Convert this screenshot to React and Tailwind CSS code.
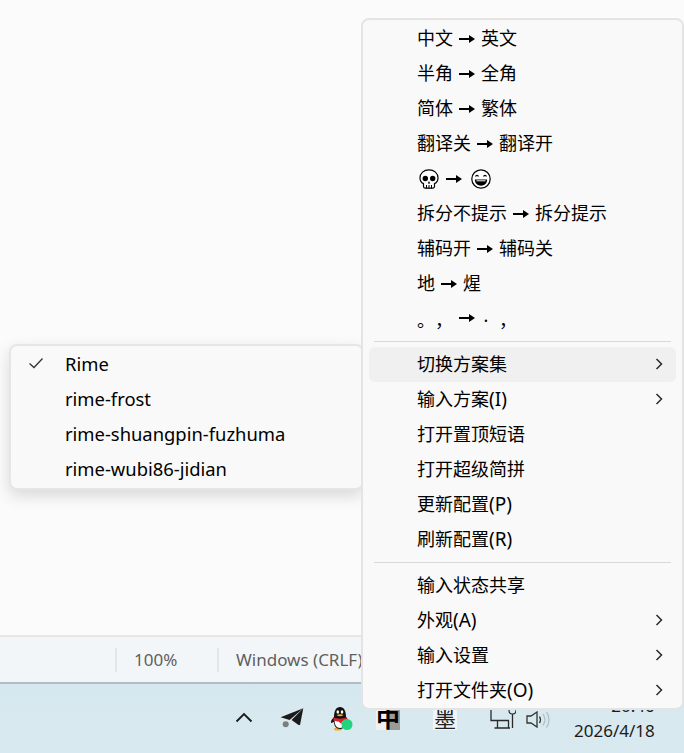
const font = { fontFamily: '"Noto Sans", "Noto Sans CJK SC", sans-serif' };

function Arrow({ className = "mx-[6px]" }) {
  return (
    <svg width="16" height="10" viewBox="0 0 16 10" className={`shrink-0 ${className}`} aria-hidden="true">
      <path d="M0 5h11" stroke="#000" strokeWidth="2" fill="none" />
      <path d="M10 1l6 4-6 4z" fill="#000" />
    </svg>
  );
}

function Chevron() {
  return (
    <svg width="8" height="12" viewBox="0 0 8 12" className="absolute right-[13px] top-[11px]" aria-hidden="true">
      <path d="M1.500 1l5 5-5 5" stroke="#2a2a2a" strokeWidth="1.500" fill="none" />
    </svg>
  );
}

function Skull() {
  return (
    <svg width="20" height="20" viewBox="0 0 20 20" aria-hidden="true">
      <path d="M10 .8C4.800.8 1 4.300 1 9c0 2.700 1.200 4.600 3.500 5.600v3c0 .9.600 1.500 1.500 1.500h8c.9 0 1.500-.6 1.500-1.500v-3C17.800 13.600 19 11.700 19 9 19 4.300 15.200.8 10 .8z" fill="#fff" stroke="#000" strokeWidth="1.200" />
      <circle cx="6.300" cy="9.500" r="2.700" fill="#000" />
      <circle cx="13.700" cy="9.500" r="2.700" fill="#000" />
      <path d="M10 12l-1.300 2.500h2.600z" fill="#000" />
      <path d="M7.500 16v3.500M10 16v3.500M12.500 16v3.500" stroke="#000" strokeWidth="1" />
    </svg>
  );
}

function Grin() {
  return (
    <svg width="20" height="20" viewBox="0 0 20 20" aria-hidden="true">
      <circle cx="10" cy="10" r="9.200" fill="#fff" stroke="#000" strokeWidth="1.200" />
      <path d="M4.500 7.500c.6-1.600 2.400-1.600 3 0M12.500 7.500c.6-1.600 2.400-1.600 3 0" stroke="#000" strokeWidth="1.200" fill="none" />
      <path d="M3.800 10.500h12.400c0 3.800-2.800 6.200-6.200 6.200s-6.200-2.400-6.200-6.200z" fill="#000" />
      <path d="M5.500 11.300h9v1h-9z" fill="#fff" />
    </svg>
  );
}

function Item({ children, chevron, active }) {
  return (
    <div className={`relative mx-[6px] flex h-[35px] items-center rounded-md pl-[48px] text-[18px] text-black ${active ? "bg-[#f0f0f0]" : ""}`}>
      {children}
      {chevron && <Chevron />}
    </div>
  );
}

function Pair({ a, b }) {
  return (
    <span className="flex items-center">
      <span>{a}</span>
      <Arrow />
      <span>{b}</span>
    </span>
  );
}

function Key({ children }) {
  return <span className="text-[19px]">{children}</span>;
}

function Sep() {
  return <div className="mx-[11px] my-[5px] h-px bg-[#d8d8d8]" />;
}

function Penguin() {
  return (
    <svg width="24" height="25" viewBox="0 0 24 25" aria-hidden="true">
      <ellipse cx="8" cy="23" rx="4" ry="1.500" fill="#f5a623" />
      <path d="M1 16c0-2 2-4 3-5 0-6 2-10 6-10s6 4 6 10c1 1 2 2 2 4l-1.500 1c0 3-2 7-6.500 7S4 19 4 16l-3 1z" fill="#111" />
      <path d="M4.500 14c0 5 2 8 5.500 8s5.500-3 5.500-8z" fill="#fff" />
      <path d="M3.500 11.500c3 1.500 9 1.500 13 0l.5 2.500c-2 1-3 1-5 1.500l-.5 2.500-3-2.500c-2 0-3-.5-5-1z" fill="#e0202a" />
      <ellipse cx="7.800" cy="6" rx="1.300" ry="1.800" fill="#fff" />
      <ellipse cx="12" cy="6" rx="1.300" ry="1.800" fill="#fff" />
      <path d="M6.500 9c2-1 5-1 7 0-2 1.600-5 1.600-7 0z" fill="#f5b323" />
      <circle cx="17" cy="18.500" r="5.500" fill="#22d47f" />
    </svg>
  );
}

export default function App() {
  return (
    <div className="relative flex h-[753px] w-[684px] flex-col overflow-hidden bg-[#fbfbfb]" style={font}>
      <div className="h-[635px] shrink-0" />

      <div className="flex h-[49px] shrink-0 items-center border-t-2 border-b-2 border-t-[#e6e6e6] border-b-[#b1bcc3] bg-[#f3f6f8] pl-[115px] text-[17px] text-[#5f5f5f]">
        <div className="flex h-[24px] w-[102px] items-center border-l-2 border-[#e3e6e8] pl-[17px]">100%</div>
        <div className="flex h-[24px] items-center whitespace-nowrap border-l-2 border-[#e3e6e8] pl-[17px]">Windows (CRLF)</div>
      </div>

      <div className="flex flex-1 items-start bg-gradient-to-b from-[#d6e8ef] to-[#d9e9f0] pl-[235px] pt-[22px]">
        <div className="flex w-[18px] justify-center pt-[6px]">
          <svg width="18" height="11" viewBox="0 0 18 11" aria-hidden="true">
            <path d="M1.500 9.500L9 2l7.500 7.500" stroke="#1a1a1a" strokeWidth="1.800" fill="none" />
          </svg>
        </div>
        <div className="ml-[27px] w-[24px]">
          <svg width="24" height="22" viewBox="0 0 24 22" aria-hidden="true">
            <path d="M23.300 2.300L.6 11.300l9 2.700z" fill="#1a1a1a" />
            <path d="M23.300 2.300L11.600 14l7 5h1.400z" fill="#1a1a1a" />
            <circle cx="5.700" cy="18.300" r="3" fill="#7d7d7d" />
          </svg>
        </div>
        <div className="ml-[26px] w-[24px]"><Penguin /></div>
        <div className="ml-[22px] flex h-[24px] w-[24px] items-center justify-center bg-[linear-gradient(90deg,#eef2f3_0%,#eef2f3_50%,#9a9a9a_50%,#9a9a9a_100%)] text-[24px] font-bold leading-none text-black">中</div>
        <div className="ml-[33px] flex h-[24px] w-[24px] items-center justify-center bg-[#f2f4f5] text-[22px] leading-none text-[#222]">墨</div>
        <div className="ml-[33px] w-[26px]">
          <svg width="26" height="24" viewBox="0 0 26 24" aria-hidden="true">
            <path d="M1 0v14.500h18M7.500 14.500v7.500M4.500 22h15.500M18.500 14.500v7.500M22.500 8v14" stroke="#2a2a2a" strokeWidth="1.300" fill="none" />
            <path d="M19 2v2.500c0 2 1.500 3.500 3.500 3.500s3.500-1.500 3.500-3.500V2" stroke="#2a2a2a" strokeWidth="1.200" fill="none" />
          </svg>
        </div>
        <div className="ml-[10px] w-[26px] pt-[5px]">
          <svg width="26" height="18" viewBox="0 0 26 18" aria-hidden="true">
            <path d="M1 5h4L11 1v15l-6-4H1z" stroke="#333" strokeWidth="1.300" fill="none" />
            <path d="M13.500 5.500c1.200 2 1.200 4.500 0 6.500" stroke="#333" strokeWidth="1.300" fill="none" />
            <path d="M17 3c2.300 3.500 2.300 8 0 11.500M20.500 1c3.300 4.500 3.300 11 0 15.500" stroke="#b5bfc4" strokeWidth="1.300" fill="none" />
          </svg>
        </div>
        <div className="ml-[22px] -mt-[12px] whitespace-nowrap text-[17px] leading-[26px] text-[#1b1b1b]">
          <div className="text-right leading-[24px]">20:46</div>
          <div>2026/4/18</div>
        </div>
      </div>

      <div className="absolute left-[9px] top-[344px] flex h-[146px] w-[355px] flex-col rounded-lg border-2 border-[#e6e6e6] bg-[#f9f9f9] text-[18.4px] text-black shadow-[0_6px_16px_rgba(0,0,0,0.14)]">
        <div className="relative flex h-[35px] items-center pl-[54px]">
          <svg width="16" height="12" viewBox="0 0 16 12" className="absolute left-[17px] top-[11px]" aria-hidden="true">
            <path d="M1.500 6.500L6 10.500 14.500 1.500" stroke="#333" strokeWidth="1.300" fill="none" />
          </svg>
          Rime
        </div>
        <div className="flex h-[35px] items-center pl-[54px]">rime-frost</div>
        <div className="flex h-[35px] items-center pl-[54px]">rime-shuangpin-fuzhuma</div>
        <div className="flex h-[35px] items-center pl-[54px]">rime-wubi86-jidian</div>
      </div>

      <div className="absolute left-[361px] top-[18px] flex w-[323px] flex-col rounded-lg border-2 border-[#e4e4e4] bg-[#f9f9f9] pt-[1px]">
        <Item><Pair a="中文" b="英文" /></Item>
        <Item><Pair a="半角" b="全角" /></Item>
        <Item><Pair a="简体" b="繁体" /></Item>
        <Item><Pair a="翻译关" b="翻译开" /></Item>
        <Item>
          <span className="ml-[2px] flex items-center">
            <Skull />
            <Arrow className="ml-[7px] mr-[9px]" />
            <Grin />
          </span>
        </Item>
        <Item><Pair a="拆分不提示" b="拆分提示" /></Item>
        <Item><Pair a="辅码开" b="辅码关" /></Item>
        <Item><Pair a="地" b="煋" /></Item>
        <Item>
          <span className="flex items-center">
            <span className="mt-[4px] w-[18px]">。</span>
            <span className="mt-[4px] w-[18px]">，</span>
            <Arrow className="mx-[6px] -mt-[2px]" />
            <span className="-ml-[4px] mt-[4px] w-[18px] text-center">·</span>
            <span className="ml-[4px] mt-[4px] w-[18px]">，</span>
          </span>
        </Item>
        <Sep />
        <Item chevron active>切换方案集</Item>
        <Item chevron><span>输入方案<Key>(I)</Key></span></Item>
        <Item>打开置顶短语</Item>
        <Item>打开超级简拼</Item>
        <Item><span>更新配置<Key>(P)</Key></span></Item>
        <Item><span>刷新配置<Key>(R)</Key></span></Item>
        <Sep />
        <Item>输入状态共享</Item>
        <Item chevron><span>外观<Key>(A)</Key></span></Item>
        <Item chevron>输入设置</Item>
        <Item chevron><span>打开文件夹<Key>(O)</Key></span></Item>
      </div>
    </div>
  );
}
